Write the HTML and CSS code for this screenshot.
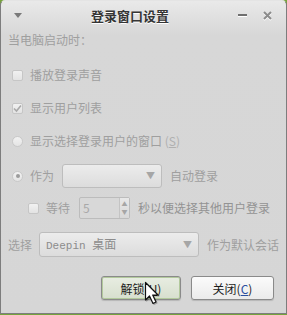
FILE: index.html
```html
<!DOCTYPE html>
<html lang="zh-CN">

<head>
  <meta charset="UTF-8" />
  <title>登录窗口设置</title>
  <link rel="stylesheet" href="styles.css">
</head>

<body>

  <div class="window">
    <!-- Barra de título -->
    <div class="titlebar">
      <span class="menu-arrow"></span>
      <span class="title">登录窗口设置</span>
      <span class="btn-min"></span>
      <svg class="btn-close" width="9" height="10" viewBox="0 0 9 10">
        <path d="M1 2 L8 9 M8 2 L1 9" stroke="#fff" stroke-width="2" />
        <path d="M1 1 L8 8 M8 1 L1 8" stroke="#8c8c8c" stroke-width="2" />
      </svg>
    </div>

    <div class="content">
      <div class="row label">当电脑启动时：</div>

      <div class="row opt first">
        <span class="check"></span>
        <span>播放登录声音</span>
      </div>

      <div class="row opt">
        <span class="check checked">
          <svg width="9" height="9" viewBox="0 0 9 9"><path d="M1 4.5 L3.5 7 L8 1.5" fill="none" stroke="#a9a9a9" stroke-width="1.6" /></svg>
        </span>
        <span>显示用户列表</span>
      </div>

      <div class="row opt">
        <span class="radio"></span>
        <span>显示选择登录用户的窗口 <span class="mnemonic">(<u>S</u>)</span></span>
      </div>

      <div class="row auto">
        <span class="radio selected"></span>
        <span class="as">作为</span>
        <div class="combo user-combo"><span class="arrow">▼</span></div>
        <span>自动登录</span>
      </div>

      <div class="row wait">
        <span class="check"></span>
        <span class="wait-label">等待</span>
        <div class="spin">
          <span class="spin-value">5</span>
          <span class="spin-btns"><i>▲</i><i>▼</i></span>
        </div>
        <span class="secs">秒以便选择其他用户登录</span>
      </div>

      <div class="row session">
        <span>选择</span>
        <div class="combo session-combo">
          <span class="session-name">Deepin <span class="cjk">桌面</span></span>
          <span class="arrow">▼</span>
        </div>
        <span>作为默认会话</span>
      </div>

      <div class="buttons">
        <button class="button unlock">解锁(<u>U</u>)</button>
        <button class="button close">关闭(<u>C</u>)</button>
      </div>
    </div>

    <!-- Cursor do mouse -->
    <svg class="cursor" width="18" height="26" viewBox="0 0 18 26">
      <path d="M1.5 1.5 L1.5 19 L5.5 15 L9 22.5 L12 21 L8.7 14 L14 14 Z" fill="#fff" stroke="#111" stroke-width="1.2" stroke-linejoin="round" />
    </svg>
  </div>

</body>

</html>
```

FILE: styles.css
```css
* {
  box-sizing: border-box;
}

body {
  margin: 0;
  background: #76a33c;
  font-family: "Noto Sans CJK SC", "DejaVu Sans", sans-serif;
  font-size: 12px;
  color: #9f9f9f;
}

.window {
  position: relative;
  width: 287px;
  height: 314px;
  background: linear-gradient(to bottom, #e9e9e9 0px, #d7d7d7 34px, #d6d6d6 100%);
  border: 1px solid #7d7d7d;
  border-top-color: #e4e4e4;
  border-radius: 5px 5px 0 0;
  overflow: hidden;
}

.titlebar {
  height: 29px;
  display: flex;
  align-items: center;
}

.menu-arrow {
  width: 0;
  height: 0;
  margin-left: 13px;
  border-left: 4px solid transparent;
  border-right: 4px solid transparent;
  border-top: 5px solid #7a7a7a;
}

.title {
  margin-left: 69px;
  font-size: 13px;
  font-weight: bold;
  color: #353535;
  text-shadow: 0 1px 0 #fff;
  line-height: 16px;
}

.btn-min {
  margin-left: auto;
  width: 9px;
  height: 3px;
  background: #6f6f6f;
  border-bottom: 1px solid #fff;
}

.btn-close {
  margin-left: 16px;
  margin-right: 14px;
}

.content {
  padding-left: 7px;
}

.row {
  display: flex;
  align-items: center;
  height: 20px;
  line-height: 16px;
  white-space: nowrap;
}

.opt {
  margin-top: 13px;
  padding-left: 4px;
  gap: 7px;
}

.opt.first {
  margin-top: 15px;
}

.check {
  width: 11px;
  height: 11px;
  border: 1px solid #c6c6c6;
  border-radius: 2px;
  background: linear-gradient(to bottom, #f1f1f1, #e3e3e3);
  display: flex;
  align-items: center;
  justify-content: center;
}

.radio {
  width: 11px;
  height: 11px;
  border: 1px solid #c9c9c9;
  border-radius: 50%;
  background: linear-gradient(to bottom, #f2f2f2, #e4e4e4);
  display: flex;
  align-items: center;
  justify-content: center;
}

.radio.selected::after {
  content: "";
  width: 4px;
  height: 4px;
  border-radius: 50%;
  background: #9c9c9c;
}

.mnemonic {
  color: #b0b0b0;
}

.auto {
  margin-top: 13px;
  height: 24px;
  padding-left: 4px;
}

.as {
  margin-left: 7px;
  width: 32px;
}

.combo {
  height: 24px;
  border: 1px solid #bdbdbd;
  border-radius: 3px;
  background: linear-gradient(to bottom, #ececec, #dcdcdc);
  display: flex;
  align-items: center;
  justify-content: space-between;
  padding: 0 6px 0 6px;
}

.arrow {
  font-size: 9px;
  color: #a6a6a6;
  margin-left: auto;
}

.user-combo {
  width: 100px;
  margin-right: 8px;
}

.wait {
  margin-top: 9px;
  height: 22px;
  padding-left: 20px;
}

.wait-label {
  margin-left: 7px;
  width: 33px;
}

.spin {
  width: 51px;
  height: 22px;
  border: 1px solid #bcbcbc;
  border-radius: 2px;
  background: #d8d8d8;
  display: flex;
  align-items: center;
  padding-left: 3px;
  margin-right: 8px;
}

.spin-value {
  color: #a8a8a8;
}

.spin-btns {
  margin-left: auto;
  width: 10px;
  height: 20px;
  border-left: 1px solid #c4c4c4;
  display: flex;
  flex-direction: column;
  align-items: center;
  justify-content: center;
  background: linear-gradient(to bottom, #e8e8e8, #d8d8d8);
}

.spin-btns i {
  font-style: normal;
  font-size: 6px;
  line-height: 8px;
  color: #a6a6a6;
}

.secs {
  color: #939393;
}

.session {
  margin-top: 13px;
  height: 25px;
}

.session-combo {
  width: 160px;
  height: 25px;
  margin-left: 7px;
  margin-right: 8px;
}

.session-name {
  font-family: "Liberation Mono", monospace;
  font-size: 11px;
  color: #8c8c8c;
}

.cjk {
  font-family: "Noto Sans CJK SC", sans-serif;
  font-size: 12px;
}

.buttons {
  display: flex;
  justify-content: flex-end;
  gap: 10px;
  margin-top: 19px;
  padding-right: 12px;
}

.button {
  height: 24px;
  border: 1px solid #8a8a8a;
  border-radius: 3px;
  font-family: "Noto Sans CJK SC", sans-serif;
  font-size: 12px;
  color: #1c1c1c;
  padding: 0;
  box-shadow: 0 1px 1px rgba(0, 0, 0, 0.15);
}

.unlock {
  width: 80px;
  background: linear-gradient(to bottom, #e8ede2, #d7dfce);
  box-shadow: inset 0 0 0 1px #b2c99c, 0 1px 1px rgba(0, 0, 0, 0.15);
}

.close {
  width: 83px;
  background: linear-gradient(to bottom, #fbfbfb, #ebebeb);
}

.close u {
  color: #2a4fa0;
}

.cursor {
  position: absolute;
  left: 143px;
  top: 280px;
  filter: drop-shadow(1px 1px 0 rgba(0, 0, 0, 0.25));
}
```
